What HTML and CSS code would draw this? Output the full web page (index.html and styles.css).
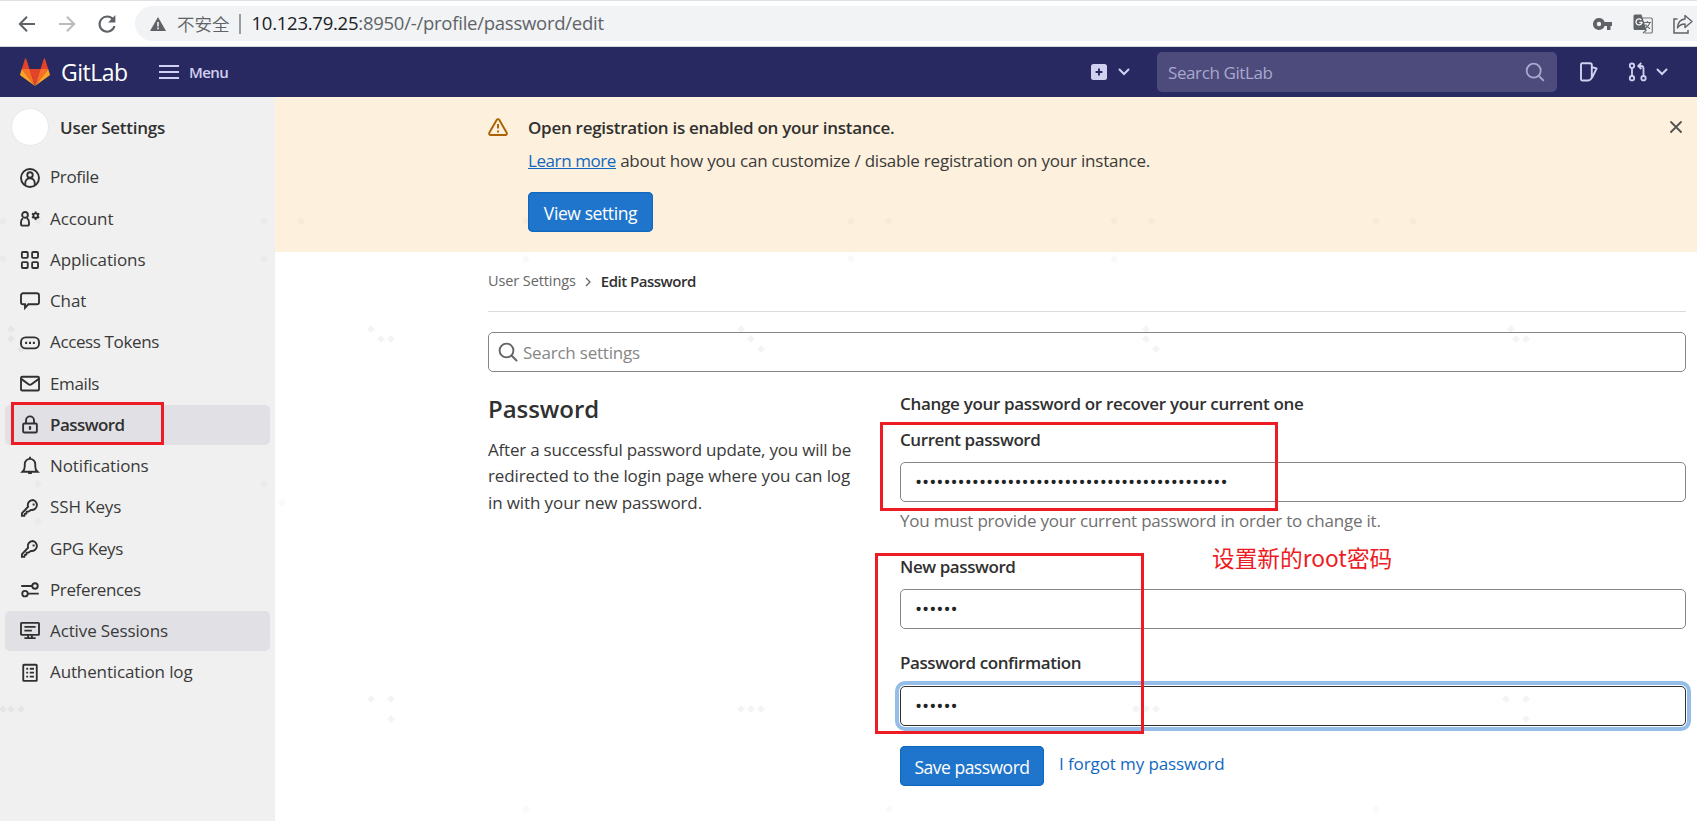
FILE: index.html
```html
<!DOCTYPE html>
<html lang="en">
<head>
<meta charset="utf-8">
<title>Edit Password · User Settings · GitLab</title>
<link rel="stylesheet" href="styles.css">
</head>
<body>
<div class="browser">
  <div class="browser-nav">
    <svg class="b-icon" viewBox="0 0 20 20"><path d="M18 10H3M10 2.8 2.8 10l7.200 7.200" stroke="#5f6368" stroke-width="2" fill="none"/></svg>
    <svg class="b-icon" viewBox="0 0 20 20"><path d="M2 10h15M10 2.800 17.200 10 10 17.200" stroke="#b9bbbe" stroke-width="2" fill="none"/></svg>
    <svg class="b-icon" viewBox="0 0 20 20"><path d="M16.300 5.600A7.600 7.600 0 1 0 17.500 12" stroke="#5f6368" stroke-width="2.100" fill="none"/><path d="M18.400 1v7.400H11z" fill="#5f6368"/></svg>
  </div>
  <div class="address">
    <svg class="a-warn" viewBox="0 0 16 14"><path d="M8 0l8 14H0z" fill="#5f6368"/><path d="M8 5v4.500M8 10.600v1.700" stroke="#f1f3f4" stroke-width="1.600"/></svg>
    <span class="insecure">不安全</span>
    <span class="a-sep"></span>
    <span class="url"><b>10.123.79.25</b>:8950/-/profile/password/edit</span>
    <div class="a-actions">
      <svg class="a-key" viewBox="0 0 20 14"><path d="M6 1a6 6 0 1 0 5.600 8H14v4h3.500V9H19V5h-7.400A6 6 0 0 0 6 1zm0 3.800a2.200 2.200 0 1 1 0 4.400 2.200 2.200 0 0 1 0-4.400z" fill="#5f6368"/></svg>
      <svg class="a-trans" viewBox="0 0 20 20"><path d="M8 4h10a1.300 1.300 0 0 1 1.300 1.300v12.400A1.300 1.300 0 0 1 18 19h-6.500" fill="none" stroke="#77797c" stroke-width="1.200"/><path d="M2 .5h6.500L13.500 16H2A1.500 1.500 0 0 1 .5 14.500V2A1.500 1.500 0 0 1 2 .5z" fill="#5f6368"/><path d="M8.300 6A3 3 0 1 0 9 8.300H6.300" fill="none" stroke="#fff" stroke-width="1.300"/><path d="M11 8.500h7M14.500 7v1.500M16.800 8.500c-.5 2.500-2 4.200-4 5.500M12.500 10.500c1 2 2.500 3.200 4.500 4.200M10 19l3.500-3" fill="none" stroke="#6a6c70" stroke-width="1.200"/></svg>
      <svg class="a-share" viewBox="0 0 20 20"><path d="M4.500 5H1v14h14v-3" fill="none" stroke="#5f6368" stroke-width="1.500"/><path d="M12 1.500 19 7.500l-7 6V10c-4 0-6 1.500-7.500 4 .3-5 3-8.700 7.500-9z" fill="none" stroke="#5f6368" stroke-width="1.400" stroke-linejoin="round"/></svg>
    </div>
  </div>
</div>

<header class="navbar">
  <svg class="logo" viewBox="0 0 30 28"><path d="M15 28 9.500 11h11z" fill="#e24329"/><path d="M15 28 9.500 11H1.800z" fill="#fc6d26"/><path d="M1.800 11 .1 16.200c-.2.500 0 1 .4 1.300L15 28z" fill="#fca326"/><path d="M1.800 11h7.700L6.200.8C6-.1 5.200-.1 5 .8z" fill="#e24329"/><path d="M15 28l5.500-17h7.700z" fill="#fc6d26"/><path d="M28.200 11l1.700 5.200c.2.500 0 1-.4 1.300L15 28z" fill="#fca326"/><path d="M28.200 11h-7.700L23.800.8c.2-.9 1-.9 1.200 0z" fill="#e24329"/></svg>
  <span class="brand">GitLab</span>
  <svg class="burger" viewBox="0 0 20 16"><path d="M0 2h20M0 8h20M0 14h20" stroke="#d1d0f0" stroke-width="1.900"/></svg>
  <span class="menu">Menu</span>
  <div class="nav-right">
    <svg class="plus" viewBox="0 0 16 16"><rect width="16" height="16" rx="2.500" fill="#d1d0f0"/><path d="M8 4.600v6.800M4.600 8h6.800" stroke="#292961" stroke-width="1.900"/></svg>
    <svg class="chev chev-a" viewBox="0 0 12 8"><path d="M1.500 1.500 6 6l4.500-4.500" /></svg>
    <div class="nav-search"><span>Search GitLab</span><svg viewBox="0 0 20 20"><circle cx="8.700" cy="8.700" r="7" fill="none" stroke="#a9a8cf" stroke-width="1.800"/><path d="M13.800 13.800 18.300 18.300" stroke="#a9a8cf" stroke-width="1.900" stroke-linecap="round"/></svg></div>
    <svg class="issues" viewBox="0 0 20 20"><path d="M3.200 1.200h7.800a1.800 1.800 0 0 1 1.800 1.800v11.500a4 4 0 0 1-4 4H3.200a1.200 1.200 0 0 1-1.200-1.200V2.400a1.200 1.200 0 0 1 1.200-1.200zM13 5.200l4.600 1.300-4.600 9.300" fill="none" stroke="#d1d0f0" stroke-width="1.900" stroke-linejoin="round"/></svg>
    <svg class="mr" viewBox="0 0 20 20"><g fill="none" stroke="#d1d0f0" stroke-width="1.800"><circle cx="4" cy="3.700" r="2.200"/><circle cx="4" cy="16.200" r="2.200"/><circle cx="15.500" cy="16.200" r="2.200"/><path d="M4 6v8M15.500 14V6.500c0-1.500-1-2.500-2.500-2.500H11M13.300 1 10.200 4l3.100 3"/></g></svg>
    <svg class="chev chev-b" viewBox="0 0 12 8"><path d="M1.500 1.500 6 6l4.500-4.500"/></svg>
  </div>
</header>

<div class="page">
  <aside class="sidebar">
    <div class="context"><span class="avatar"></span><span class="context-title">User Settings</span></div>
    <ul class="side-list">
      <li><svg viewBox="0 0 16 16"><circle cx="8" cy="8" r="7.200"/><circle cx="8" cy="5.600" r="2.200"/><path d="M4.200 13.800v-1.600C4.200 10 5.700 8.200 8 8.200s3.800 1.800 3.800 4v1.600"/></svg><span class="tight">Profile</span></li>
      <li><svg viewBox="0 0 16 16"><circle cx="4" cy="4.700" r="2.300"/><path d="M2.500 7.400C1.300 8 .8 9 .8 10.500V12c0 .9.500 1.300 1.300 1.300h3.800c.8 0 1.300-.4 1.300-1.300v-1.500C7.200 9 6.700 8 5.500 7.400"/><circle cx="12.500" cy="5.300" r="1.800"/><path d="M12.500 1.900v1.600M12.500 7.100v1.600M9.600 3.600l1.300.8M14.100 6.200l1.300.8M9.600 7l1.300-.8M14.100 4.400l1.300-.8"/></svg><span>Account</span></li>
      <li><svg viewBox="0 0 16 16"><rect x="1.500" y="1.600" width="4.700" height="4.700" rx=".8"/><rect x="9.700" y="1.600" width="4.700" height="4.700" rx=".8"/><rect x="1.500" y="9.700" width="4.700" height="4.700" rx=".8"/><rect x="9.700" y="9.700" width="4.700" height="4.700" rx=".8"/></svg><span>Applications</span></li>
      <li><svg viewBox="0 0 16 16"><path d="M2.500 1.800h11a1.700 1.700 0 0 1 1.700 1.700v5.400a1.700 1.700 0 0 1-1.700 1.700H6.600L4 13.500v-2.900H2.500A1.700 1.700 0 0 1 .8 8.900V3.500a1.700 1.700 0 0 1 1.700-1.700z"/></svg><span>Chat</span></li>
      <li><svg viewBox="0 0 16 16"><rect x=".8" y="3.500" width="14.400" height="8.800" rx="3.800"/><path d="M4.100 7.900h1.600M7.200 7.900h1.600M10.300 7.900h1.600" stroke-width="1.700"/></svg><span class="tight">Access Tokens</span></li>
      <li><svg viewBox="0 0 16 16"><rect x=".8" y="2.200" width="14.400" height="11" rx="1"/><path d="M1 3.900l5.800 4.300a2 2 0 0 0 2.400 0L15 3.900"/></svg><span class="tight">Emails</span></li>
      <li class="active"><svg viewBox="0 0 16 16"><rect x="2.500" y="6.800" width="11" height="7.200" rx="1"/><path d="M4.800 6.800V4.300a3.200 3.200 0 0 1 6.400 0v2.500"/><path d="M8 8.900v2.900" stroke-width="1.800"/></svg><span>Password</span><span class="mark mark-side"></span></li>
      <li><svg viewBox="0 0 16 16"><path d="M2 12.600c1.300-1.100 1.800-2.500 1.800-4.200V6.500a4.200 4.200 0 0 1 8.400 0v1.900c0 1.700.5 3.100 1.800 4.200zM8 .6v1.500M6.500 13.700h3"/></svg><span>Notifications</span></li>
      <li><svg viewBox="0 0 16 16"><path d="M10.300 1.600a4 4 0 1 1-1.600 7.900l-1.900 1.300-1.500.1-.2 1.500-1.300.4-.3 1.400-2 .1.100-2.200L6.500 7A4 4 0 0 1 10.300 1.600z"/><path d="M10.100 5.200h1.600" stroke-width="1.600"/></svg><span>SSH Keys</span></li>
      <li><svg viewBox="0 0 16 16"><path d="M10.300 1.600a4 4 0 1 1-1.600 7.900l-1.900 1.300-1.500.1-.2 1.500-1.300.4-.3 1.400-2 .1.100-2.200L6.500 7A4 4 0 0 1 10.300 1.600z"/><path d="M10.100 5.200h1.600" stroke-width="1.600"/></svg><span class="tight">GPG Keys</span></li>
      <li><svg viewBox="0 0 16 16"><circle cx="12" cy="4.800" r="2.200"/><circle cx="4" cy="10.900" r="2.200"/><path d="M1 4.800h8.800M6.200 10.900H15"/></svg><span class="tight">Preferences</span></li>
      <li class="hover"><svg viewBox="0 0 16 16"><rect x=".8" y="1.500" width="14.400" height="9.600" rx=".5"/><path d="M3.500 4.700h9M3.500 7.700h6M6.500 11v2.500M9.500 11v2.500M3.500 13.700h9"/></svg><span>Active Sessions</span></li>
      <li><svg viewBox="0 0 16 16"><rect x="2.600" y="1.400" width="10.800" height="12.900" rx=".5"/><path d="M5 4.600h1.500M5 7.700h1.500M5 10.900h1.500M7.800 4.600h3.400M7.800 7.700h3.400M7.800 10.900h3.400"/></svg><span>Authentication log</span></li>
    </ul>
  </aside>

  <main class="main">
    <section class="banner">
      <svg class="banner-icon" viewBox="0 0 20 18"><path d="M8.800 1.800a1.400 1.400 0 0 1 2.400 0l7.500 13c.5 1-.1 2.200-1.300 2.200H2.600c-1.200 0-1.800-1.200-1.300-2.200z" fill="none" stroke="#ab6100" stroke-width="1.900"/><path d="M10 6v4.500M10 12.400v2" stroke="#ab6100" stroke-width="1.900"/></svg>
      <div class="banner-body">
        <h2>Open registration is enabled on your instance.</h2>
        <p><a href="#">Learn more</a> about how you can customize / disable registration on your instance.</p>
        <button class="btn btn-view"><span>View setting</span></button>
      </div>
      <svg class="close" viewBox="0 0 12 12"><path d="M1 1l10 10M11 1 1 11" stroke="#525252" stroke-width="1.800" stroke-linecap="round"/></svg>
    </section>

    <div class="content">
      <nav class="crumbs"><span>User Settings</span><svg viewBox="0 0 6 10"><path d="M1 1l4 4-4 4" fill="none" stroke="#666" stroke-width="1.300"/></svg><strong>Edit Password</strong></nav>
      <div class="settings-search"><svg viewBox="0 0 20 20"><circle cx="8.500" cy="8.500" r="6.900" fill="none" stroke="#666" stroke-width="1.900"/><path d="M13.500 13.500 18.500 18.500" stroke="#666" stroke-width="2" stroke-linecap="round"/></svg><span>Search settings</span></div>
      <div class="columns">
        <div class="intro">
          <h1>Password</h1>
          <p>After a successful password update, you will be<br><span class="l2">redirected to the login page where you can log</span><br><span class="l2">in with your new password.</span></p>
        </div>
        <form class="form">
          <h3>Change your password or recover your current one</h3>
          <div class="group g1">
            <label>Current password</label>
            <div class="field">••••••••••••••••••••••••••••••••••••••••••••</div>
            <span class="mark mark-current"></span>
          </div>
          <p class="help">You must provide your current password in order to change it.</p>
          <div class="group g2">
            <label>New password</label>
            <div class="field">••••••</div>
            <span class="note">设置新的root密码</span>
            <span class="mark mark-new"></span>
          </div>
          <div class="group g3">
            <label>Password confirmation</label>
            <div class="field focus">••••••</div>
          </div>
          <div class="actions"><button type="button" class="btn btn-save"><span>Save password</span></button><a href="#">I forgot my password</a></div>
        </form>
      </div>
    </div>
  </main>
</div>

<svg class="specks" viewBox="0 0 1697 821">
  <defs><path id="d" d="M0-4 4 0 0 4-4 0z"/></defs>
  <g fill="#808080" fill-opacity=".05">
    <use href="#d" x="3" y="221"/><use href="#d" x="38" y="221"/><use href="#d" x="264" y="221"/><use href="#d" x="301" y="221"/><use href="#d" x="526" y="221"/><use href="#d" x="564" y="221"/><use href="#d" x="851" y="221"/><use href="#d" x="889" y="221"/><use href="#d" x="1114" y="221"/><use href="#d" x="1151" y="221"/><use href="#d" x="1376" y="221"/><use href="#d" x="1413" y="221"/>
    <use href="#d" x="3" y="259"/><use href="#d" x="264" y="259"/><use href="#d" x="526" y="259"/><use href="#d" x="851" y="259"/><use href="#d" x="1114" y="259"/>
    <use href="#d" x="38" y="484"/><use href="#d" x="264" y="484"/><use href="#d" x="38" y="521"/><use href="#d" x="282" y="503"/>
    <use href="#d" x="526" y="809"/><use href="#d" x="889" y="809"/><use href="#d" x="1376" y="809"/>
  </g>
  <g fill="#808080" fill-opacity=".09">
    <use href="#d" x="11" y="329"/><use href="#d" x="11" y="339"/><use href="#d" x="21" y="349"/><use href="#d" x="371" y="329"/><use href="#d" x="381" y="339"/><use href="#d" x="391" y="339"/><use href="#d" x="741" y="329"/><use href="#d" x="751" y="339"/><use href="#d" x="761" y="349"/><use href="#d" x="1146" y="329"/><use href="#d" x="1146" y="339"/><use href="#d" x="1156" y="349"/><use href="#d" x="1511" y="329"/><use href="#d" x="1516" y="339"/><use href="#d" x="1526" y="339"/>
    <use href="#d" x="3" y="709"/><use href="#d" x="11" y="709"/><use href="#d" x="21" y="709"/><use href="#d" x="371" y="699"/><use href="#d" x="391" y="699"/><use href="#d" x="391" y="719"/><use href="#d" x="741" y="709"/><use href="#d" x="751" y="709"/><use href="#d" x="761" y="709"/><use href="#d" x="1136" y="709"/><use href="#d" x="1146" y="709"/><use href="#d" x="1156" y="709"/><use href="#d" x="1506" y="699"/><use href="#d" x="1526" y="699"/><use href="#d" x="1526" y="719"/>
  </g>
</svg>
</body>
</html>
```

FILE: styles.css
```css
* { box-sizing: border-box; }
body { margin: 0; width: 1697px; height: 821px; overflow: hidden; position: relative; background: #fff; color: #3a3a3a; font: 400 17px/26.25px "Open Sans", "Noto Sans CJK SC", sans-serif; letter-spacing: -.21px; }
svg { display: block; flex: none; }
span, strong, h1, h2, h3, a, label { white-space: nowrap; }
h1, h2, h3, p, ul { margin: 0; padding: 0; }

.browser { height: 47px; display: flex; padding-top: 5px; border-top: 1px solid #dee1e6; border-bottom: 1px solid #d5d6d8; }
.browser-nav { display: flex; align-items: center; gap: 20px; width: 135px; padding-left: 17px; height: 35px; }
.b-icon { width: 20px; height: 20px; }
.address { flex: 1; height: 35px; display: flex; align-items: center; background: #f1f3f4; border-radius: 18px 0 0 18px; padding-left: 15px; color: #5f6368; }
.a-warn { width: 16px; height: 14px; margin-right: 11px; }
.insecure { width: 62px; font: 350 17.5px/26px "Noto Sans CJK SC", sans-serif; letter-spacing: 0; }
.a-sep { width: 1.5px; height: 20px; background: #9a9da0; margin-right: 11px; }
.url { font-weight: 400; font-size: 18.5px; letter-spacing: -.25px; }
.url b { font-weight: 400; color: #202124; }
.a-actions { margin-left: auto; display: flex; align-items: center; gap: 20px; padding-right: 4px; }
.a-key { width: 20px; height: 14px; }
.a-trans, .a-share { width: 20px; height: 20px; }

.navbar { height: 50px; background: #292961; display: flex; align-items: center; padding-left: 20px; color: #d1d0f0; }
.logo { width: 30px; height: 28px; }
.brand { margin-left: 11px; width: 98px; font-size: 23px; font-weight: 400; letter-spacing: -.5px; color: #fff; padding-top: 1px; }
.burger { width: 20px; height: 16px; }
.menu { margin-left: 10px; font-weight: 600; font-size: 15px; letter-spacing: -.6px; }
.nav-right { margin-left: auto; display: flex; align-items: center; padding-right: 29px; }
.plus { width: 16px; height: 16px; }
.chev { width: 12px; height: 8px; }
.chev path { fill: none; stroke: #d1d0f0; stroke-width: 2; stroke-linecap: round; }
.chev-a { margin: 0 27px 0 11px; }
.chev-b { margin-left: 8px; }
.nav-search { width: 400px; height: 40px; border-radius: 5px; background: #4c4b7c; display: flex; align-items: center; justify-content: space-between; padding: 2px 12px 0 11px; color: #a9a8cf; letter-spacing: -.4px; margin-right: 22px; }
.nav-search svg { width: 20px; height: 20px; margin-top: -2px; }
.issues { width: 20px; height: 20px; margin-right: 29px; }
.mr { width: 20px; height: 20px; }

.page { display: flex; height: 724px; }
.sidebar { width: 275px; background: #f0f0f0; }
.context { height: 60.5px; display: flex; align-items: center; padding-left: 11px; }
.avatar { width: 38px; height: 38px; border-radius: 50%; background: #fff; border: 1.5px solid #e8e8e8; }
.context-title { margin-left: 11px; padding-top: 1px; font-weight: 600; font-size: 17px; letter-spacing: -.25px; color: #303030; }
.side-list { list-style: none; padding: 0 5px; letter-spacing: -.12px; }
.side-list li { position: relative; height: 40px; margin-bottom: 1.25px; border-radius: 5px; display: flex; align-items: center; padding-left: 15px; }
.side-list .tight { letter-spacing: -.37px; }
.side-list svg { width: 20px; height: 20px; margin-right: 10px; fill: none; stroke: #303030; stroke-width: 1.5; }
.side-list .active, .side-list .hover { background: #e1e0e5; }
.side-list .active { font-weight: 600; font-size: 17px; letter-spacing: -.55px; color: #303030; }

.main { flex: 1; }
.banner { height: 155px; background: #fdf1dd; display: flex; align-items: flex-start; padding: 17px 15px 0 213px; }
.banner-icon { width: 20px; height: 18px; margin-top: 4px; }
.banner-body { flex: 1; margin-left: 20px; }
.banner h2 { font-size: 17px; font-weight: 600; line-height: 28px; letter-spacing: -.28px; color: #303030; }
.banner p { margin-top: 6px; height: 26px; }
.banner p a { letter-spacing: -.42px; }
.close { width: 12px; height: 12px; margin-top: 7px; }
a { color: #1068bf; text-decoration: none; }
.banner a { text-decoration: underline; }
.btn { flex: none; height: 40px; border: 0; border-radius: 5px; background: #1f75cb; box-shadow: inset 0 0 0 1.25px #1068bf; color: #fff; font: 400 17.5px/26px "Open Sans", sans-serif; letter-spacing: -.4px; padding: 1px 0 0; display: block; }
.btn-view { width: 125px; margin-top: 18px; }
.btn-save { width: 144px; letter-spacing: -.5px; }

.content { padding: 0 11px 0 213px; }
.crumbs { height: 60px; display: flex; align-items: center; border-bottom: 1px solid #dbdbdb; font-size: 14.5px; letter-spacing: -.1px; color: #666; }
.crumbs svg { width: 6px; height: 10px; margin: 0 10px 0 9px; }
.crumbs strong { font-weight: 600; font-size: 15px; letter-spacing: -.5px; color: #303030; }
.settings-search { margin-top: 20px; height: 40px; border: 1.25px solid #868686; border-radius: 5px; display: flex; align-items: center; padding-left: 9px; color: #868686; }
.settings-search svg { width: 20px; height: 20px; margin-right: 5px; }
.settings-search span { padding-top: 2px; }
.columns { display: flex; }
.intro { width: 412px; padding-top: 22px; }
.intro h1 { font-size: 24px; font-weight: 600; line-height: 30px; letter-spacing: -.05px; color: #303030; }
.intro p { margin-top: 13px; white-space: nowrap; }
.l2 { letter-spacing: -.11px; }
.form { flex: 1; padding-top: 19px; }
.form h3 { font-size: 17px; font-weight: 600; line-height: 26px; letter-spacing: -.32px; color: #303030; }
.group { position: relative; display: flex; flex-direction: column; }
label { font-weight: 600; font-size: 17px; line-height: 26px; letter-spacing: -.42px; color: #303030; }
.field { height: 40px; border: 1.25px solid #868686; border-radius: 5px; padding: 6px 14px; font-size: 19px; font-weight: 400; line-height: 26px; letter-spacing: -.04px; color: #222; }
.focus { border-color: #303030; box-shadow: 0 0 0 1px #fff, 0 0 0 5px #94bde8; }
.g1 { margin-top: 10px; }
.g1 label, .g2 label, .g3 label { margin-bottom: 9px; }
.help { margin-top: 6px; color: #707070; line-height: 26px; }
.g2 { margin-top: 20px; }
.g3 { margin-top: 21px; }
.g3 .field { margin-top: 1px; }
.actions { display: flex; margin-top: 20px; gap: 15px; letter-spacing: -.1px; }
.actions a { margin-top: 5px; }
.mark { position: absolute; border: 3px solid #ed1c24; z-index: 2; }
.mark-side { left: 6px; top: -3px; width: 153px; height: 43px; }
.mark-current { left: -20px; top: -5px; width: 398px; height: 89px; }
.mark-new { left: -25px; top: -1px; width: 269px; height: 181px; }
.note { position: absolute; left: 312px; top: -12px; font: 22.7px/32px "Noto Sans CJK SC", sans-serif; letter-spacing: 0; color: #ed1c24; }
.specks { position: absolute; left: 0; top: 0; width: 1697px; height: 821px; pointer-events: none; z-index: 3; }
```
